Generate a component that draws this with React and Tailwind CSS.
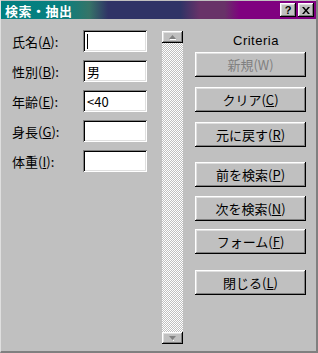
const raised =
  "shadow-[inset_-1px_-1px_#000,inset_1px_1px_#fff,inset_-2px_-2px_#808080,inset_2px_2px_#dfdfdf]";
const sunken =
  "shadow-[inset_1px_1px_#808080,inset_-1px_-1px_#fff,inset_2px_2px_#000,inset_-2px_-2px_#dfdfdf]";

const fields = [
  { label: "氏名", key: "A", value: "", caret: true },
  { label: "性別", key: "B", value: "男" },
  { label: "年齢", key: "E", value: "<40" },
  { label: "身長", key: "G", value: "" },
  { label: "体重", key: "I", value: "" },
];

const buttons = [
  { text: "新規", key: "W", disabled: true, mt: "mt-0" },
  { text: "クリア", key: "C", mt: "mt-[10px]" },
  { text: "元に戻す", key: "R", mt: "mt-[10px]" },
  { text: "前を検索", key: "P", mt: "mt-[15px]" },
  { text: "次を検索", key: "N", mt: "mt-[9px]" },
  { text: "フォーム", key: "F", mt: "mt-[8px]" },
  { text: "閉じる", key: "L", mt: "mt-[16px]" },
];

const Arrow = ({ up }) => (
  <svg width="7" height="5" viewBox="0 0 7 5">
    {up ? (
      <>
        <path d="M3.5 0 L7 4 L0 4 Z" fill="#808080" />
        <rect x="1" y="4" width="6" height="1" fill="#fff" />
      </>
    ) : (
      <>
        <path d="M0 0 L7 0 L3.5 4 Z" fill="#808080" />
        <rect x="4" y="4" width="1" height="1" fill="#fff" />
      </>
    )}
  </svg>
);

const App = () => {
  return (
    <div className="w-[318px] h-[353px] bg-[#c0c0c0] flex flex-col overflow-hidden border-l border-l-[#dfdfdf] border-r-2 border-r-[#808080] border-b-2 border-b-[#808080] pt-px font-['Noto_Sans_CJK_JP',sans-serif] text-[13px] text-black">
      {/* title bar */}
      <div className="h-[18px] flex items-center justify-between pl-[4px] pr-[2px] bg-[linear-gradient(90deg,#008080_0%,#0a7f7f_20%,#357468_28%,#2f3366_34%,#2f3366_57%,#683268_63%,#683268_71%,#800080_76%,#800080_100%)]">
        <span className="text-white font-bold text-[13px] leading-none tracking-[0.5px]">検索・抽出</span>
        <div className="flex gap-[2px]">
          <div className={`w-[16px] h-[14px] bg-[#c0c0c0] flex items-center justify-center ${raised}`}>
            <span className="font-['Liberation_Sans',sans-serif] font-bold text-[11px] leading-none">?</span>
          </div>
          <div className={`w-[16px] h-[14px] bg-[#c0c0c0] flex items-center justify-center ${raised}`}>
            <svg width="8" height="7" viewBox="0 0 8 7">
              <path d="M0 0h2l2 2.5L6 0h2L5 3.5 8 7H6L4 4.5 2 7H0l3-3.5z" fill="#000" />
            </svg>
          </div>
        </div>
      </div>

      <div className="flex flex-1">
        {/* fields */}
        <div className="flex flex-col gap-[8px] pt-[11px] pl-[11px] w-[161px]">
          {fields.map((f) => (
            <div key={f.key} className="flex items-center h-[22px]">
              <span className="w-[71px] leading-none whitespace-nowrap">
                {f.label}(<u className="underline-offset-1">{f.key}</u>):
              </span>
              <div className={`w-[64px] h-[22px] bg-white flex items-center pl-[4px] ${sunken}`}>
                {f.caret && <div className="w-px h-[15px] bg-black" />}
                <span className="leading-none">{f.value}</span>
              </div>
            </div>
          ))}
        </div>

        {/* scrollbar */}
        <div className="w-[21px] flex flex-col pt-[12px] pb-[7px]">
          <div className={`h-[12px] bg-[#c0c0c0] flex items-center justify-center ${raised}`}>
            <Arrow up />
          </div>
          <div className="flex-1 bg-[image:repeating-conic-gradient(#fff_0%_25%,#c0c0c0_0%_50%)] bg-size-[2px_2px]" />
          <div className={`h-[12px] bg-[#c0c0c0] flex items-center justify-center ${raised}`}>
            <Arrow />
          </div>
        </div>

        {/* buttons */}
        <div className="flex flex-col pl-[12px] pt-[11px]">
          <div className="h-[22px] flex items-center pl-[38px] font-['Liberation_Sans',sans-serif] text-[13px] tracking-[0.5px]">
            Criteria
          </div>
          <div className="flex flex-col mt-[0px]">
            {buttons.map((b) => (
              <div
                key={b.key}
                className={`${b.mt} w-[111px] h-[25px] bg-[#c0c0c0] flex items-center justify-center leading-none ${raised} ${
                  b.disabled ? "text-[#808080]" : ""
                }`}
              >
                {b.text}(
                {b.disabled ? b.key : <u className="underline-offset-1">{b.key}</u>})
              </div>
            ))}
          </div>
        </div>
      </div>
    </div>
  );
};

export default App;
